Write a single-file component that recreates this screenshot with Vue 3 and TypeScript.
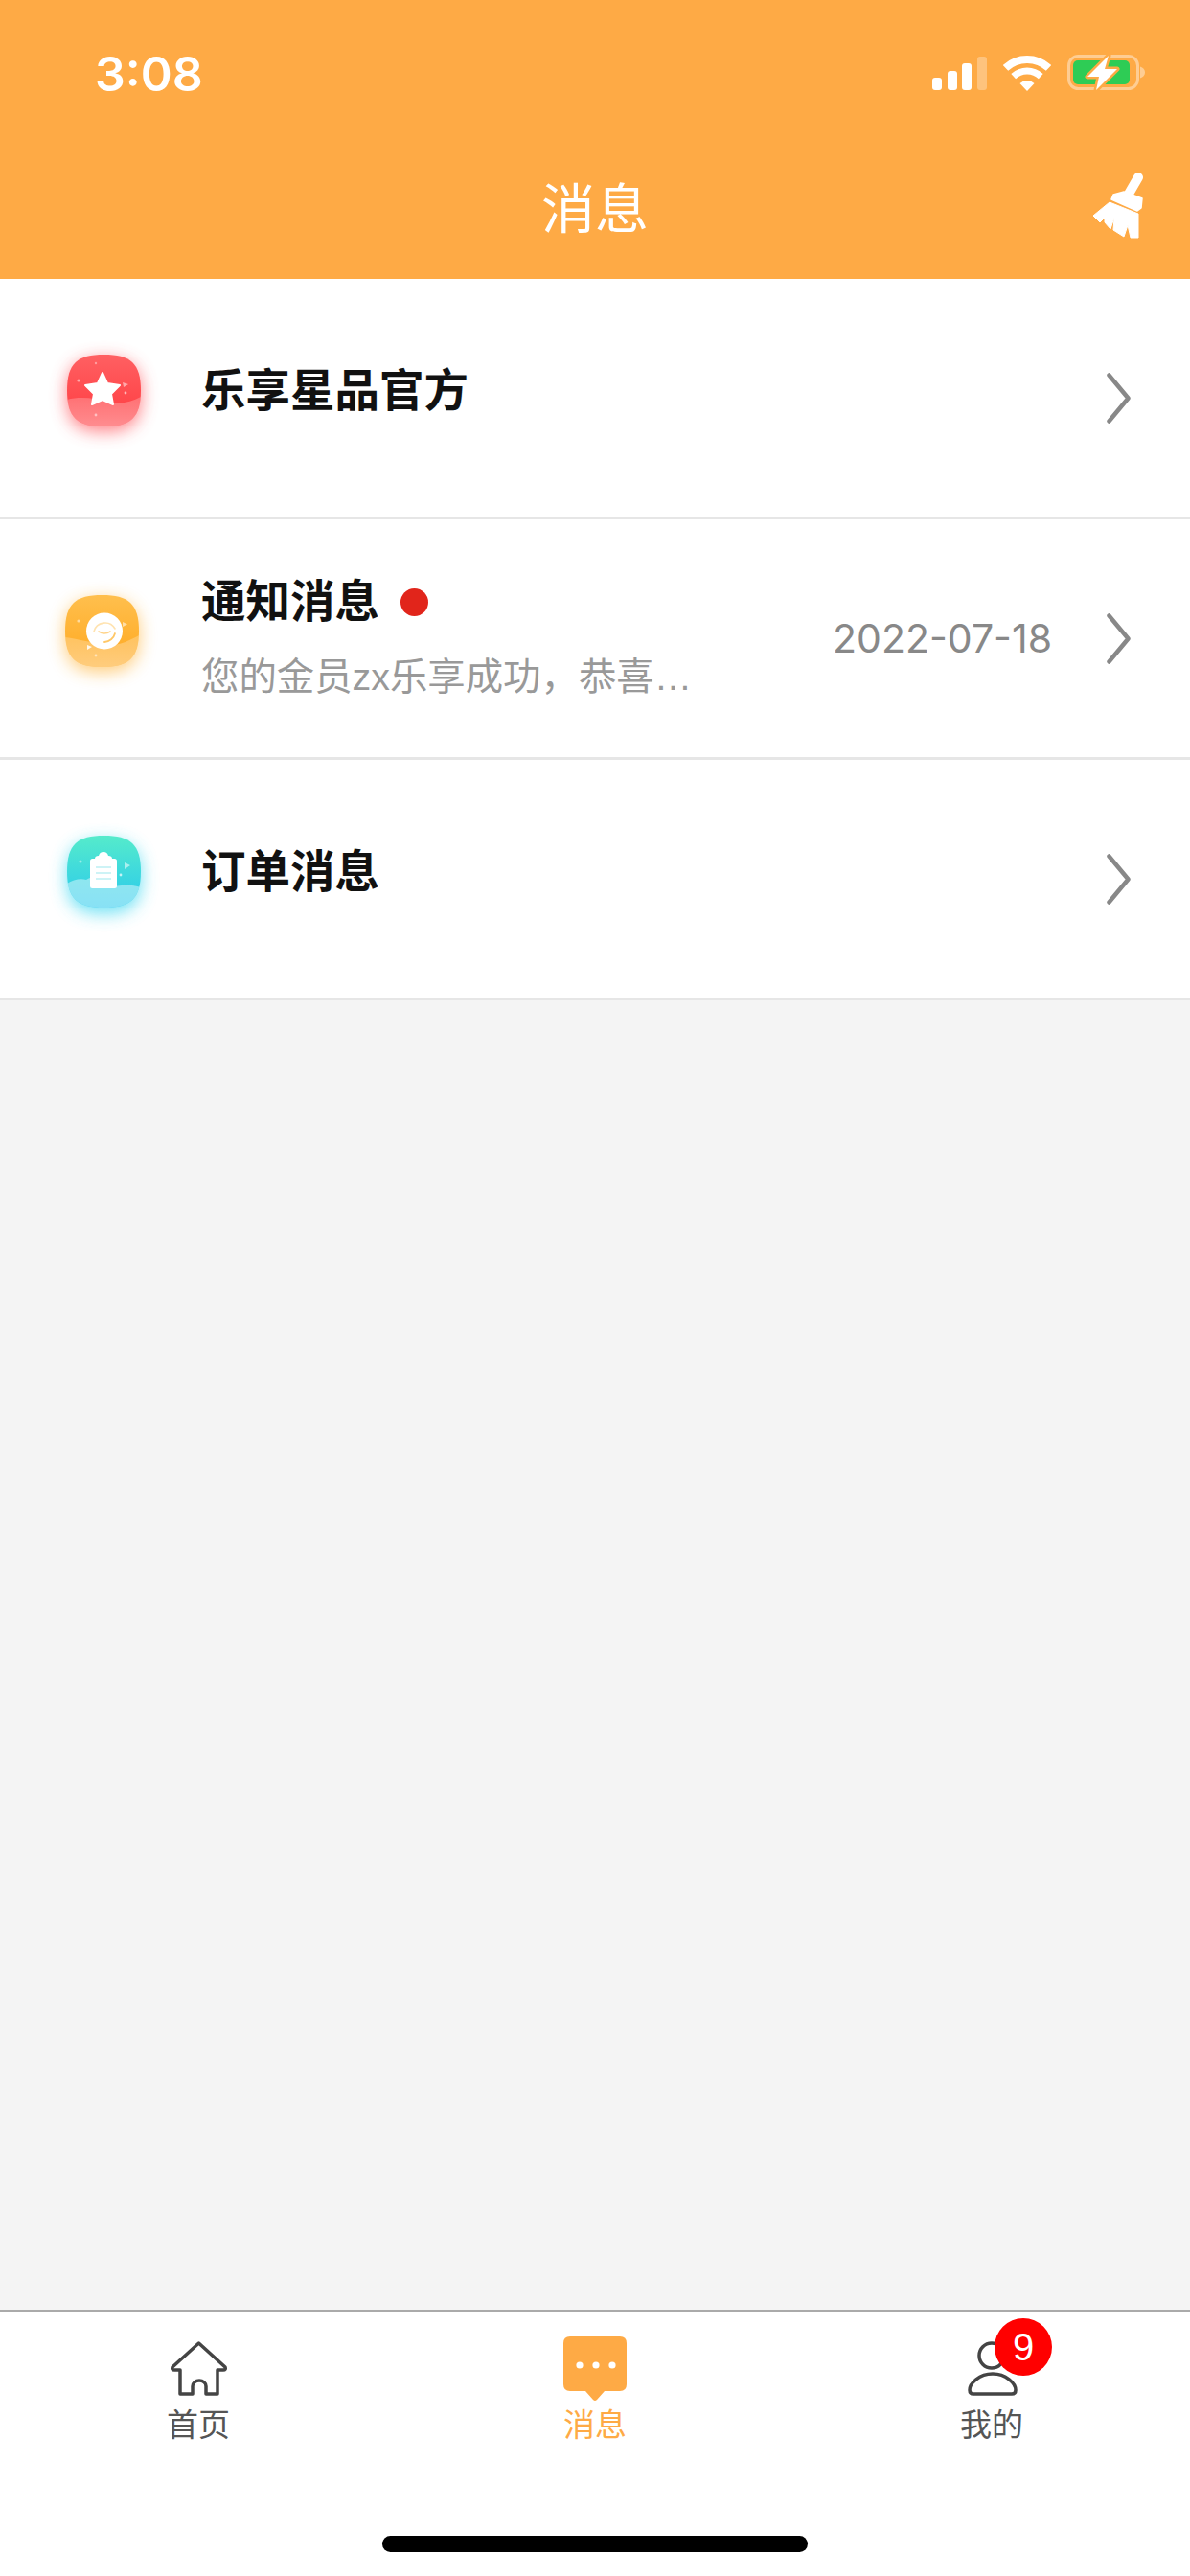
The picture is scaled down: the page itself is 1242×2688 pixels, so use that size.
<script setup lang="ts">
interface Row {
  key: string
  title: string
  sub?: string
  date?: string
  dot?: boolean
}

const rows: Row[] = [
  { key: 'star', title: '乐享星品官方' },
  { key: 'notice', title: '通知消息', sub: '您的金员zx乐享成功，恭喜…', date: '2022-07-18', dot: true },
  { key: 'order', title: '订单消息' }
]

const squircle = 'M38.5 0C66 0 77 9 77 37.5C77 66 66 75 38.5 75C11 75 0 66 0 37.5C0 9 11 0 38.5 0Z'
</script>

<template>
  <div class="page">
    <header class="top">
      <div class="status">
        <span class="time">3:08</span>
        <div class="status-icons">
          <svg width="57" height="35" viewBox="0 0 57 35">
            <rect x="0" y="22" width="10" height="13" rx="3" fill="#fff" />
            <rect x="16" y="15" width="10" height="20" rx="3" fill="#fff" />
            <rect x="31" y="7" width="10" height="28" rx="3" fill="#fff" />
            <rect x="47" y="0" width="10" height="35" rx="3" fill="#fff" opacity=".3" />
          </svg>
          <svg width="50" height="37" viewBox="0 0 50 37">
            <path d="M2.5 12.9A33 33 0 0 1 47.5 12.9" fill="none" stroke="#fff" stroke-width="8" />
            <path d="M10.7 21.6A21 21 0 0 1 39.3 21.6" fill="none" stroke="#fff" stroke-width="7" />
            <path d="M25 37L17.5 29A11 11 0 0 1 32.5 29Z" fill="#fff" />
          </svg>
          <svg width="81" height="38" viewBox="0 0 81 38">
            <rect x="1.5" y="1.5" width="72" height="34" rx="10" fill="none" stroke="#fff" stroke-opacity=".42" stroke-width="3" />
            <rect x="6" y="6" width="59" height="25" rx="5" fill="#2ECC55" />
            <path d="M76 12.5C79 13.5 81 15.5 81 18.5C81 21.5 79 23.5 76 24.5Z" fill="#fff" fill-opacity=".42" />
            <path d="M43 1L21 23H33L30 37L52 15H39Z" fill="#fff" stroke="#FEAA45" stroke-width="5" stroke-linejoin="round" paint-order="stroke" />
          </svg>
        </div>
      </div>
      <div class="nav">
        <span class="nav-side"></span>
        <h1 class="nav-title">消息</h1>
        <svg class="broom" width="55" height="69" viewBox="0 0 55 69">
          <path d="M48 5L37 24" fill="none" stroke="#fff" stroke-width="10" stroke-linecap="round" />
          <path d="M22 23L33 20L52 27L51 37L47 40L20 28Z" fill="#fff" stroke="#fff" stroke-width="1.5" stroke-linejoin="round" />
          <path d="M18 31L48 43L48 68L40 68L37 55L33 67L22 60L23 47L19 59L13 52L13 47L8 52L1 45Z" fill="#fff" stroke="#fff" stroke-width="1" stroke-linejoin="round" />
        </svg>
      </div>
    </header>

    <main class="content">
      <div v-for="row in rows" :key="row.key" class="row">
        <svg class="logo" :class="'logo-' + row.key" width="77" height="75" viewBox="0 0 77 75">
          <defs>
            <filter :id="'blur-' + row.key" x="-60%" y="-60%" width="220%" height="220%">
              <feGaussianBlur stdDeviation="9" />
            </filter>
            <clipPath :id="'clip-' + row.key">
              <path :d="squircle" />
            </clipPath>
            <linearGradient id="grad-star" x1="0" y1="0" x2="0" y2="1">
              <stop offset="0" stop-color="#FF6062" />
              <stop offset="1" stop-color="#FF3A3F" />
            </linearGradient>
            <linearGradient id="grad-notice" x1="0" y1="0" x2="0" y2="1">
              <stop offset="0" stop-color="#FFBF4D" />
              <stop offset="1" stop-color="#FFA81F" />
            </linearGradient>
            <linearGradient id="grad-order" x1="0" y1="0" x2="0" y2="1">
              <stop offset="0" stop-color="#55EBCB" />
              <stop offset="1" stop-color="#29C8EE" />
            </linearGradient>
            <linearGradient :id="'cloud-' + row.key" x1="0" y1="0" x2="0" y2="1">
              <stop offset="0" stop-color="#fff" stop-opacity=".22" />
              <stop offset="1" stop-color="#fff" stop-opacity=".42" />
            </linearGradient>
          </defs>

          <template v-if="row.key === 'star'">
            <path :d="squircle" fill="#FF4D55" opacity=".72" :filter="'url(#blur-star)'" transform="translate(0 5)" />
            <path :d="squircle" fill="url(#grad-star)" />
            <g clip-path="url(#clip-star)">
              <path d="M0 47C15 43 30 46 42 49C55 52 66 50 77 44V75H0Z" :fill="'url(#cloud-star)'" />
            </g>
            <path d="M37 19L42 30L55 32L46 41L48 52L37 47L26 52L28 41L19 32L32 30Z" fill="#fff" stroke="#fff" stroke-width="2" stroke-linejoin="round" />
            <circle cx="12" cy="27" r="1.6" fill="#fff" opacity=".5" />
            <circle cx="61" cy="40" r="1.4" fill="#fff" opacity=".6" />
            <path d="M58 29L64 31L59 34Z" fill="#fff" opacity=".5" />
            <circle cx="30" cy="9" r="1.2" fill="#fff" opacity=".4" />
            <circle cx="30" cy="63" r="1.4" fill="#fff" opacity=".5" />
          </template>

          <template v-else-if="row.key === 'notice'">
            <path :d="squircle" fill="#FFB030" opacity=".65" :filter="'url(#blur-notice)'" transform="translate(0 5)" />
            <path :d="squircle" fill="url(#grad-notice)" />
            <g clip-path="url(#clip-notice)">
              <path d="M0 44C14 46 30 50 40 52C54 54 66 48 77 42V75H0Z" :fill="'url(#cloud-notice)'" />
            </g>
            <circle cx="41" cy="37.5" r="19" fill="#fff" />
            <path d="M30 38A12 12 0 0 1 52 35" fill="none" stroke="#FFE3B0" stroke-width="1.6" stroke-linecap="round" />
            <path d="M52 40A12 12 0 0 1 41 49" fill="none" stroke="#FFC766" stroke-width="1.8" stroke-linecap="round" />
            <path d="M35 38Q41 42 47 38" fill="none" stroke="#FFD48A" stroke-width="1.6" stroke-linecap="round" />
            <path d="M23 52L28 54L23 57Z" fill="#fff" opacity=".85" />
            <path d="M60 28L65 30.5L60 33Z" fill="#fff" opacity=".55" />
            <circle cx="14" cy="27" r="1.6" fill="#fff" opacity=".5" />
            <circle cx="32" cy="63" r="1.4" fill="#fff" opacity=".5" />
          </template>

          <template v-else>
            <path :d="squircle" fill="#3AD7F0" opacity=".75" :filter="'url(#blur-order)'" transform="translate(0 6)" />
            <path :d="squircle" fill="url(#grad-order)" />
            <g clip-path="url(#clip-order)">
              <path d="M0 50C6 46 14 44 20 46C30 40 38 46 44 54C52 52 66 50 77 54V75H0Z" fill="#C8F1FA" opacity=".6" />
            </g>
            <rect x="24" y="24" width="28" height="31" rx="2.5" fill="#fff" />
            <path d="M29 24Q29 21 33 21Q34 17 38 17Q42 17 43 21Q47 21 47 24V28H29Z" fill="#fff" />
            <path d="M30 33H46M30 39H46M30 45H46" fill="none" stroke="#BDEFF4" stroke-width="1.5" />
            <path d="M60 28L66 31L60 35Z" fill="#fff" opacity=".55" />
            <circle cx="56" cy="41" r="1.4" fill="#fff" opacity=".7" />
            <circle cx="14" cy="27" r="1.6" fill="#fff" opacity=".45" />
          </template>
        </svg>

        <div class="text" :class="{ single: !row.sub }">
          <div class="title-line">
            <span class="title">{{ row.title }}</span>
            <i v-if="row.dot" class="dot"></i>
          </div>
          <p v-if="row.sub" class="sub">{{ row.sub }}</p>
        </div>

        <span v-if="row.date" class="date">{{ row.date }}</span>
        <svg class="chev" width="25" height="53" viewBox="0 0 25 53">
          <path d="M2.5 2.5L22.5 26.5L2.5 50.5" fill="none" stroke="#888" stroke-width="4.5" stroke-linecap="round" stroke-linejoin="round" />
        </svg>
      </div>
    </main>

    <footer class="tabbar">
      <nav class="tabs">
        <div class="tab">
          <span class="tab-icon">
            <svg width="59" height="70" viewBox="0 -5 59 70">
              <path d="M29.5 2L57 27Q58 30 55 30H49V55H37V47A7 6 0 0 0 23 47V55H10V30H4Q1 30 2 27Z" fill="none" stroke="#444" stroke-width="3.5" stroke-linejoin="round" />
            </svg>
          </span>
          <span class="tab-label">首页</span>
        </div>
        <div class="tab active">
          <span class="tab-icon">
            <svg width="66" height="70" viewBox="0 0 66 70">
              <path d="M7 0H59Q66 0 66 7V50Q66 57 59 57H43L35 66Q33 68 31 66L23 57H7Q0 57 0 50V7Q0 0 7 0Z" fill="#FEAA45" />
              <circle cx="17" cy="30" r="3.6" fill="#fff" />
              <circle cx="34" cy="30" r="3.6" fill="#fff" />
              <circle cx="51" cy="30" r="3.6" fill="#fff" />
            </svg>
          </span>
          <span class="tab-label">消息</span>
        </div>
        <div class="tab">
          <span class="tab-icon shift">
            <svg width="52" height="70" viewBox="0 -6 52 70">
              <circle cx="25" cy="14" r="13" fill="none" stroke="#444" stroke-width="3.5" />
              <path d="M26 33C40 33 50 43 50 50Q50 54 46 54H6Q2 54 2 50C2 43 12 33 26 33Z" fill="none" stroke="#444" stroke-width="3.5" stroke-linejoin="round" />
            </svg>
            <span class="badge">9</span>
          </span>
          <span class="tab-label">我的</span>
        </div>
      </nav>
      <div class="home-bar"></div>
    </footer>
  </div>
</template>

<style>
body {
  margin: 0;
}
</style>

<style scoped>
.page {
  width: 1242px;
  height: 2688px;
  display: flex;
  flex-direction: column;
  overflow: hidden;
  background: #f4f4f4;
  font-family: "Liberation Sans", "Noto Sans CJK SC", sans-serif;
}
.top {
  height: 291px;
  background: #feaa45;
  color: #fff;
  display: flex;
  flex-direction: column;
  flex: none;
}
.status {
  height: 152px;
  padding: 0 47px 0 99px;
  display: flex;
  align-items: center;
  justify-content: space-between;
  box-sizing: border-box;
}
.time {
  font-family: Inter, "Liberation Sans", sans-serif;
  font-size: 50px;
  font-weight: 600;
  line-height: 1;
  margin-top: 2px;
}
.status-icons {
  display: flex;
  align-items: center;
  gap: 17px;
}
.nav {
  height: 139px;
  padding: 0 47px 6px;
  box-sizing: border-box;
  display: flex;
  align-items: center;
}
.nav-side {
  width: 55px;
}
.nav-title {
  flex: 1;
  margin: 0;
  text-align: center;
  font-size: 56px;
  font-weight: 400;
  line-height: 64px;
}
.broom {
  margin-bottom: 9px;
}
.content {
  flex: 1;
}
.row {
  height: 251px;
  box-sizing: border-box;
  background: #fff;
  border-bottom: 3px solid #e6e6e6;
  padding: 0 62px 0 70px;
  display: flex;
  align-items: center;
}
.logo {
  flex: none;
  overflow: visible;
  margin-bottom: 16px;
}
.logo-notice {
  transform: translateX(-2px);
}
.text {
  flex: 1;
  min-width: 0;
  margin-left: 63px;
  padding-top: 2px;
}
.text.single {
  margin-bottom: 16px;
}
.title-line {
  display: flex;
  align-items: center;
  gap: 22px;
  height: 56px;
}
.title {
  font-size: 46.5px;
  font-weight: 700;
  color: #111;
  line-height: 56px;
}
.dot {
  width: 29px;
  height: 29px;
  border-radius: 50%;
  background: #e1251b;
}
.sub {
  margin: 22px 0 0;
  font-size: 39.4px;
  line-height: 56px;
  color: #999;
  white-space: nowrap;
}
.date {
  font-family: Inter, "Liberation Sans", sans-serif;
  font-size: 41px;
  color: #888;
  margin-right: 57px;
}
.chev {
  flex: none;
}
.tabbar {
  flex: none;
  background: #fff;
  border-top: 2px solid #aaa;
  height: 278px;
  box-sizing: border-box;
  display: flex;
  flex-direction: column;
  align-items: center;
}
.tabs {
  width: 100%;
  display: grid;
  grid-template-columns: repeat(3, 1fr);
  padding-top: 26px;
}
.tab {
  display: flex;
  flex-direction: column;
  align-items: center;
  gap: 5px;
  color: #555;
}
.tab.active {
  color: #feaa45;
}
.tab-icon {
  position: relative;
  height: 70px;
  display: block;
}
.tab-icon.shift {
  margin-left: 2px;
}
.tab-icon svg {
  display: block;
}
.tab-label {
  font-size: 33px;
  line-height: 36px;
}
.badge {
  position: absolute;
  left: 28px;
  top: -19px;
  width: 60px;
  height: 60px;
  border-radius: 50%;
  background: #f00;
  color: #fff;
  font-size: 40px;
  line-height: 60px;
  text-align: center;
}
.home-bar {
  width: 444px;
  height: 17px;
  border-radius: 9px;
  background: #000;
  margin-top: 97px;
}
</style>
